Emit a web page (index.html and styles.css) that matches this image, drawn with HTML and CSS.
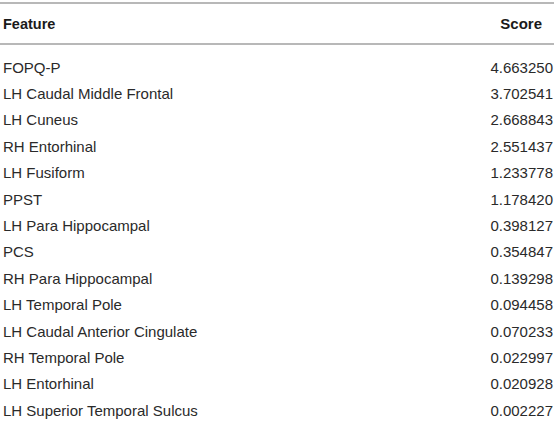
FILE: index.html
```html
<!DOCTYPE html>
<html>
<head>
<meta charset="utf-8">
<link rel="stylesheet" href="styles.css">
</head>
<body>
<table class="data">
  <thead>
    <tr><th class="feat">Feature</th><th class="score">Score</th></tr>
  </thead>
  <tbody>
    <tr class="first"><td>FOPQ-P</td><td class="score">4.663250</td></tr>
    <tr><td>LH Caudal Middle Frontal</td><td class="score">3.702541</td></tr>
    <tr><td>LH Cuneus</td><td class="score">2.668843</td></tr>
    <tr><td>RH Entorhinal</td><td class="score">2.551437</td></tr>
    <tr><td>LH Fusiform</td><td class="score">1.233778</td></tr>
    <tr><td>PPST</td><td class="score">1.178420</td></tr>
    <tr><td>LH Para Hippocampal</td><td class="score">0.398127</td></tr>
    <tr><td>PCS</td><td class="score">0.354847</td></tr>
    <tr><td>RH Para Hippocampal</td><td class="score">0.139298</td></tr>
    <tr><td>LH Temporal Pole</td><td class="score">0.094458</td></tr>
    <tr><td>LH Caudal Anterior Cingulate</td><td class="score">0.070233</td></tr>
    <tr><td>RH Temporal Pole</td><td class="score">0.022997</td></tr>
    <tr><td>LH Entorhinal</td><td class="score">0.020928</td></tr>
    <tr><td>LH Superior Temporal Sulcus</td><td class="score">0.002227</td></tr>
  </tbody>
</table>
</body>
</html>
```
FILE: styles.css
```css
html, body {
  margin: 0;
  padding: 0;
  background: #fff;
}
body {
  padding-top: 2px;
  font-family: "Liberation Sans", Arial, sans-serif;
  font-size: 15px;
  color: #2a2a2a;
}
.data {
  width: 554px;
  border-collapse: collapse;
  border-top: 2px solid #b8b8b8;
}
.data th {
  font-weight: bold;
  text-align: left;
  height: 39px;
  padding: 0 3px;
  border-bottom: 2px solid #b8b8b8;
  vertical-align: middle;
  color: #1a1a1a;
}
.data th.feat {
  font-size: 14.5px;
}
.data th.score {
  text-align: right;
  padding-right: 12px;
}
.data td {
  height: 26.4px;
  padding: 0 3px;
  vertical-align: middle;
  line-height: 17px;
}
.data tr.first td {
  padding-top: 9px;
}
.data td.score {
  text-align: right;
  padding-right: 1px;
}
```
